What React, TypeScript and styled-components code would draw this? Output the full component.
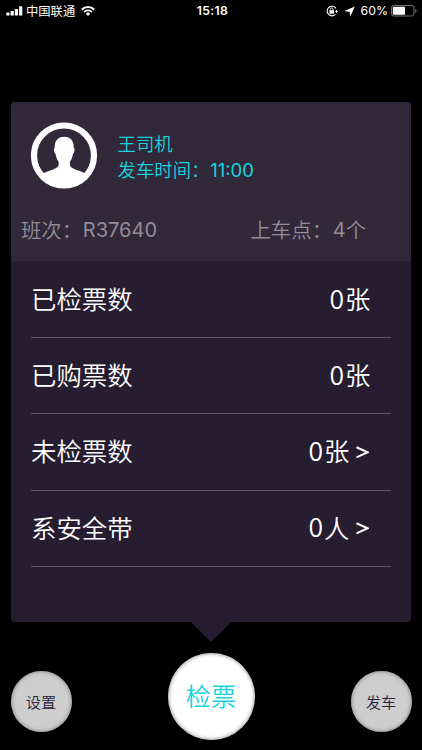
import React from "react";
import styled, { createGlobalStyle } from "styled-components";

const GlobalStyle = createGlobalStyle`
  * { box-sizing: border-box; }
  body {
    margin: 0;
    background: #000;
    font-family: "Noto Sans CJK SC", sans-serif;
    font-weight: 350;
  }
`;

const Screen = styled.div`
  width: 422px;
  height: 750px;
  background: #000;
  display: flex;
  flex-direction: column;
  overflow: hidden;
`;

const StatusBar = styled.header`
  height: 22px;
  display: grid;
  grid-template-columns: 1fr auto 1fr;
  align-items: center;
  padding: 0 5px 0 6px;
  color: #fff;
  font-weight: 400;
`;

const StatusGroup = styled.div<{ $end?: boolean }>`
  display: flex;
  align-items: center;
  justify-content: ${(p) => (p.$end ? "flex-end" : "flex-start")};
`;

const Carrier = styled.span`
  font-size: 12.3px;
  line-height: 22px;
  margin: 0 6px 0 3px;
`;

const Clock = styled.span`
  font: 600 12.2px/22px Inter, sans-serif;
  letter-spacing: 0.35px;
  padding-left: 2px;
`;

const Percent = styled.span`
  font: 400 12.3px/22px Inter, sans-serif;
  margin: 0 3px 0 6px;
`;

const Card = styled.main`
  width: 400.5px;
  height: 520px;
  margin: 80px 0 0 10.7px;
  border-radius: 4px;
  background: #261d30;
  flex: none;
`;

const CardHead = styled.section`
  height: 159px;
  border-radius: 4px 4px 0 0;
  background: #31283a;
  padding: 20px 11px 0 10.3px;
`;

const Profile = styled.div`
  display: flex;
  height: 68px;
  padding-left: 10px;
`;

const DriverText = styled.div`
  margin: 7.5px 0 0 19.5px;
  color: #14d4df;
  font-size: 18.4px;
  line-height: 26.5px;
`;

const Line = styled.div`
  display: flex;
  white-space: nowrap;
`;

const Latin = styled.span<{ $size: number }>`
  font-family: Inter, sans-serif;
  font-size: ${(p) => p.$size}px;
  font-weight: 400;
  margin: 1px 0 0 0.7px;
`;

const Trip = styled.div`
  display: grid;
  grid-template-columns: 229.5px 1fr;
  margin-top: 23px;
  color: #938d97;
  font-size: 20.4px;
  line-height: 32px;
`;

const Rows = styled.section`
  padding: 0 20.3px;
`;

const Row = styled.div`
  height: 76.2px;
  display: flex;
  justify-content: space-between;
  align-items: center;
  padding-right: 20.5px;
  color: #fff;
  font-size: 25.4px;
  line-height: 40px;
`;

const Divider = styled.hr`
  height: 1px;
  margin: 0 0 -1px;
  border: 0;
  background: #5f5766;
`;

const Label = styled.span`
  margin-top: -2px;
`;

const Chevron = styled.svg`
  margin: 3px 1px 0 7px;
`;

const Value = styled.div`
  display: flex;
  align-items: center;
  margin-top: -2px;
`;

const Digit = styled.span`
  font-size: 26.6px;
  margin: -1px 1px 0 0;
`;

const Pointer = styled.div`
  width: 40px;
  height: 20px;
  margin: 0 auto;
  flex: none;
  background: #261d30;
  clip-path: polygon(0 0, 100% 0, 50% 100%);
`;

const Actions = styled.nav`
  height: 88px;
  margin-top: 10px;
  padding: 0 10.5px;
  display: flex;
  align-items: flex-start;
  justify-content: space-between;
`;

const RoundButton = styled.button<{ $main?: boolean }>`
  width: ${(p) => (p.$main ? 87 : 61)}px;
  height: ${(p) => (p.$main ? 87 : 61)}px;
  margin-top: ${(p) => (p.$main ? 0.5 : 19)}px;
  padding: 0;
  border: 0;
  border-radius: 50%;
  background: ${(p) => (p.$main ? "#fff" : "#cecece")};
  box-shadow: inset 0 0 4px ${(p) => (p.$main ? "#84767c" : "#777")};
  color: ${(p) => (p.$main ? "#14d4df" : "#29213a")};
  font-family: inherit;
  font-weight: 350;
  font-size: ${(p) => (p.$main ? 25.2 : 15.2)}px;
  line-height: 1.4;
`;

const Signal = () => (
  <svg width="17" height="10" viewBox="0 0 17 10" fill="#fff">
    <rect x="0.3" y="6.5" width="3.2" height="3" rx=".6" />
    <rect x="4.6" y="5" width="3.2" height="4.5" rx=".6" />
    <rect x="8.8" y="3" width="3.2" height="6.5" rx=".6" />
    <rect x="13.1" y="0.3" width="3.2" height="9.2" rx=".6" />
  </svg>
);

const Wifi = () => (
  <svg width="14" height="10" viewBox="0 0 14 10" fill="none" stroke="#fff">
    <path d="M.7 3.7a8.9 8.9 0 0 1 12.6 0" strokeWidth="2" />
    <path d="M3 6a5.6 5.6 0 0 1 8 0" strokeWidth="1.8" />
    <path d="M7 10 4.8 7.7a3.1 3.1 0 0 1 4.4 0Z" fill="#fff" stroke="none" />
  </svg>
);

const RotationLock = () => (
  <svg width="12" height="12" viewBox="0 0 12 12" fill="none" stroke="#fff">
    <path d="M10 3.4A4.8 4.8 0 1 0 9.4 9.4M10.5 5v1.6" strokeWidth="1.1" />
    <path d="M8.9 6h3.1l-1.5 2.2Z" fill="#fff" stroke="none" />
    <rect x="3.4" y="5.2" width="4.6" height="3.5" rx=".4" fill="#fff" stroke="none" />
    <path d="M4.4 5.5V4.2a1.3 1.3 0 0 1 2.6 0v1.3" strokeWidth=".9" />
  </svg>
);

const LocationArrow = styled(({ className }: { className?: string }) => (
  <svg className={className} width="11" height="11" viewBox="0 0 11 11" fill="#fff">
    <path d="M10.7.4 6.2 10.7 5.7 5.9.4 5.1Z" />
  </svg>
))`
  margin-left: 6px;
`;

const Battery = () => (
  <svg width="26" height="12" viewBox="0 0 26 12">
    <rect x="0.5" y="0.5" width="22.5" height="10.5" rx="2" fill="none" stroke="#77777a" />
    <rect x="1.8" y="1.8" width="12.2" height="7.9" rx=".7" fill="#fff" />
    <path d="M24.3 4v4q1.3-.5 1.3-2t-1.3-2" fill="#77777a" />
  </svg>
);

const Avatar = () => (
  <svg width="67" height="67" viewBox="0 0 67 67">
    <circle cx="33" cy="33.5" r="30" fill="none" stroke="#fff" strokeWidth="6.2" />
    <path
      fill="#fff"
      d="M33.2 14.8C26.8 14.8 23.4 19 23.8 25.8C22.3 26 23 31.5 24.6 32C25 35.5 26.2 38 27.6 39.5V43C27.6 46.5 19.5 48 12 51.3A24.5 24.5 0 0 0 54.5 51.3C47 48 38.9 46.5 38.9 43V39.5C40.3 38 41.5 35.5 41.9 32C43.5 31.5 44.2 26 42.7 25.8C43.1 19 39.6 14.8 33.2 14.8Z"
    />
  </svg>
);

const stats = [
  { label: "已检票数", count: 0, unit: "张", link: false },
  { label: "已购票数", count: 0, unit: "张", link: false },
  { label: "未检票数", count: 0, unit: "张", link: true },
  { label: "系安全带", count: 0, unit: "人", link: true },
];

export default function App() {
  return (
    <Screen>
      <GlobalStyle />
      <StatusBar>
        <StatusGroup>
          <Signal />
          <Carrier>中国联通</Carrier>
          <Wifi />
        </StatusGroup>
        <Clock>15:18</Clock>
        <StatusGroup $end>
          <RotationLock />
          <LocationArrow />
          <Percent>60%</Percent>
          <Battery />
        </StatusGroup>
      </StatusBar>
      <Card>
        <CardHead>
          <Profile>
            <Avatar />
            <DriverText>
              <Line>王司机</Line>
              <Line>发车时间：<Latin $size={18.5}>11:00</Latin></Line>
            </DriverText>
          </Profile>
          <Trip>
            <Line>班次：<Latin $size={20}>R37640</Latin></Line>
            <Line>上车点：<Latin $size={20}>4</Latin>个</Line>
          </Trip>
        </CardHead>
        <Rows>
          {stats.map((s) => (
            <React.Fragment key={s.label}>
              <Row>
                <Label>{s.label}</Label>
                <Value>
                  <Digit>{s.count}</Digit>
                  {s.unit}
                  {s.link && (
                    <Chevron width="13" height="14" viewBox="0 0 13 14" fill="none" stroke="#fff" strokeWidth="2.1">
                      <path d="M.5 2.2 11.7 7.3.5 12.4" />
                    </Chevron>
                  )}
                </Value>
              </Row>
              <Divider />
            </React.Fragment>
          ))}
        </Rows>
      </Card>
      <Pointer />
      <Actions>
        <RoundButton>设置</RoundButton>
        <RoundButton $main>检票</RoundButton>
        <RoundButton>发车</RoundButton>
      </Actions>
    </Screen>
  );
}
